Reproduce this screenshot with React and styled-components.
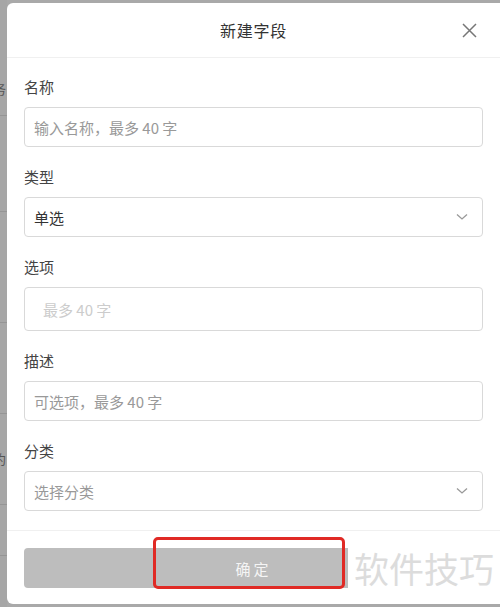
import React from "react";
import styled, { createGlobalStyle } from "styled-components";

const GlobalStyle = createGlobalStyle`
  html, body {
    margin: 0;
    padding: 0;
    width: 500px;
    height: 607px;
    overflow: hidden;
    background: #a9a9a9;
    font-family: "Noto Sans CJK SC", "Noto Sans", sans-serif;
  }
`;

const Page = styled.div`
  display: flex;
  width: 500px;
  height: 607px;
  overflow: hidden;
`;

// 뒤 배경 리스트 (모달 뒤로 살짝 보임)
const Backdrop = styled.div`
  flex: 0 0 7px;
  display: flex;
  flex-direction: column;
  padding-top: 62px;
  background: #a6a6a6;
`;

const BackRow = styled.div`
  height: ${(p) => p.h}px;
  border-bottom: 1px solid #959595;
  color: #555;
  font-size: 13px;
  line-height: ${(p) => p.h}px;
  white-space: nowrap;
  text-indent: -7px;
  overflow: hidden;
`;

const Modal = styled.div`
  flex: 0 0 500px;
  margin-top: 3px;
  height: 601px;
  background: #ffffff;
  border-radius: 6px;
  display: flex;
  flex-direction: column;
`;

const Header = styled.div`
  display: grid;
  grid-template-columns: 1fr auto 1fr;
  align-items: center;
  height: 54px;
  padding: 0 24px 0 17px;
  border-bottom: 1px solid #f0f0f0;
`;

const Title = styled.div`
  grid-column: 2;
  font-size: 16px;
  color: #333;
  letter-spacing: 0.8px;
`;

const Close = styled.button`
  justify-self: end;
  margin-right: 6px;
  border: none;
  background: none;
  padding: 0;
  display: flex;
  cursor: pointer;
`;

const Body = styled.div`
  padding: 19px 24px 19px 17px;
  border-bottom: 1px solid #f0f0f0;
`;

const Field = styled.div`
  display: flex;
  flex-direction: column;
  gap: 10px;
  & + & {
    margin-top: 20px;
  }
`;

const Label = styled.label`
  font-size: 15px;
  line-height: 20px;
  color: #444;
`;

const Box = styled.div`
  box-sizing: border-box;
  height: ${(p) => p.h || 40}px;
  border: 1px solid #d9d9d9;
  border-radius: 4px;
  display: flex;
  align-items: center;
  justify-content: space-between;
  padding: 0 14px 0 ${(p) => p.pl || 9}px;
  font-size: 15px;
  color: ${(p) => p.color || "#999"};
`;

const Footer = styled.div`
  position: relative;
  padding: 17px 24px 0 17px;
`;

const SubmitButton = styled.button`
  width: 100%;
  height: 40px;
  border: none;
  border-radius: 4px;
  background: #bdbdbd;
  color: #f5f5f5;
  font-family: inherit;
  font-size: 15px;
  letter-spacing: 3px;
`;

const Highlight = styled.div`
  position: absolute;
  left: 146px;
  top: 6px;
  width: 186px;
  height: 46px;
  border: 3px solid #e02a25;
  border-radius: 5px;
`;

const Watermark = styled.div`
  position: absolute;
  left: 341px;
  top: 15px;
  width: 160px;
  height: 44px;
  padding-left: 6px;
  background: #ffffff;
  color: #dcdcdc;
  font-size: 35px;
  line-height: 44px;
  white-space: nowrap;
`;

const Chevron = () => (
  <svg width="12" height="8" viewBox="0 0 12 8">
    <path d="M1 1.5 L6 6 L11 1.5" fill="none" stroke="#999" strokeWidth="1.3" />
  </svg>
);

const fields = [
  { label: "名称", text: "输入名称，最多 40 字" },
  { label: "类型", text: "单选", color: "#333", select: true },
  { label: "选项", text: "最多 40 字", color: "#ccc", h: 44, pl: 18 },
  { label: "描述", text: "可选项，最多 40 字" },
  { label: "分类", text: "选择分类", select: true },
];

const backRows = [
  { h: 53, t: "务" },
  { h: 95, t: "" },
  { h: 110, t: "" },
  { h: 90, t: "" },
  { h: 90, t: "约" },
  { h: 50, t: "" },
];

export default function App() {
  return (
    <Page>
      <GlobalStyle />
      <Backdrop>
        {backRows.map((r, i) => (
          <BackRow key={i} h={r.h}>
            {r.t}
          </BackRow>
        ))}
      </Backdrop>
      <Modal>
        <Header>
          <Title>新建字段</Title>
          <Close aria-label="关闭">
            <svg width="15" height="15" viewBox="0 0 15 15">
              <path d="M1 1 L14 14 M14 1 L1 14" stroke="#777" strokeWidth="1.5" />
            </svg>
          </Close>
        </Header>
        <Body>
          {fields.map((f) => (
            <Field key={f.label}>
              <Label>{f.label}</Label>
              <Box h={f.h} pl={f.pl} color={f.color}>
                <span>{f.text}</span>
                {f.select && <Chevron />}
              </Box>
            </Field>
          ))}
        </Body>
        <Footer>
          <SubmitButton>确定</SubmitButton>
          <Highlight />
          <Watermark>软件技巧</Watermark>
        </Footer>
      </Modal>
    </Page>
  );
}
